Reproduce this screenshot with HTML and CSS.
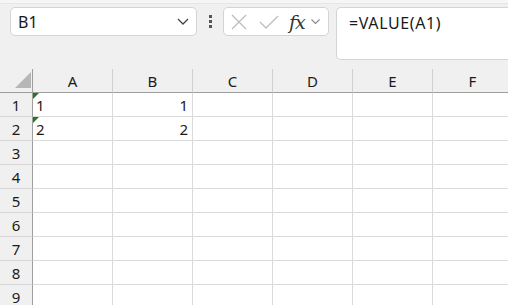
FILE: index.html
```html
<!DOCTYPE html>
<html lang="en">

<head>
    <meta charset="UTF-8">
    <title>Sheet</title>
    <link rel="stylesheet" href="styles.css">
</head>

<body>
    <div class="topbar"></div>

    <div class="toolbar">
        <div class="namebox">
            <span>B1</span>
            <svg class="chevron" width="12" height="7" viewBox="0 0 12 7">
                <path d="M1 1 L6 6 L11 1" fill="none" stroke="#444" stroke-width="1.3"/>
            </svg>
        </div>

        <div class="grip"><i></i><i></i><i></i></div>

        <div class="fxbox">
            <svg width="16" height="16" viewBox="0 0 16 16">
                <path d="M1 1 L15 15 M15 1 L1 15" stroke="#bdbdbd" stroke-width="1.3" fill="none"/>
            </svg>
            <svg class="check" width="20" height="14" viewBox="0 0 20 14">
                <path d="M1 7 L7 13 L19 1" stroke="#bdbdbd" stroke-width="1.3" fill="none"/>
            </svg>
            <span class="fx">fx</span>
            <svg class="small-chevron" width="9" height="5" viewBox="0 0 9 5">
                <path d="M0.5 0.5 L4.5 4.5 L8.5 0.5" fill="none" stroke="#888" stroke-width="1.1"/>
            </svg>
        </div>

        <div class="formula">=VALUE(A1)</div>
    </div>

    <div class="sheet">
        <div class="corner">
            <svg width="16" height="16" viewBox="0 0 16 16">
                <polygon points="16,0 16,16 0,16" fill="#b6b6b6"/>
            </svg>
        </div>
        <div class="colhead">A</div>
        <div class="colhead">B</div>
        <div class="colhead">C</div>
        <div class="colhead">D</div>
        <div class="colhead">E</div>
        <div class="colhead">F</div>

        <div class="rowhead">1</div>
        <div class="cell text-cell">1</div>
        <div class="cell num">1</div>
        <div class="cell"></div><div class="cell"></div><div class="cell"></div><div class="cell"></div>

        <div class="rowhead">2</div>
        <div class="cell text-cell">2</div>
        <div class="cell num">2</div>
        <div class="cell"></div><div class="cell"></div><div class="cell"></div><div class="cell"></div>

        <div class="rowhead">3</div>
        <div class="cell"></div><div class="cell"></div><div class="cell"></div><div class="cell"></div><div class="cell"></div><div class="cell"></div>
        <div class="rowhead">4</div>
        <div class="cell"></div><div class="cell"></div><div class="cell"></div><div class="cell"></div><div class="cell"></div><div class="cell"></div>
        <div class="rowhead">5</div>
        <div class="cell"></div><div class="cell"></div><div class="cell"></div><div class="cell"></div><div class="cell"></div><div class="cell"></div>
        <div class="rowhead">6</div>
        <div class="cell"></div><div class="cell"></div><div class="cell"></div><div class="cell"></div><div class="cell"></div><div class="cell"></div>
        <div class="rowhead">7</div>
        <div class="cell"></div><div class="cell"></div><div class="cell"></div><div class="cell"></div><div class="cell"></div><div class="cell"></div>
        <div class="rowhead">8</div>
        <div class="cell"></div><div class="cell"></div><div class="cell"></div><div class="cell"></div><div class="cell"></div><div class="cell"></div>
        <div class="rowhead">9</div>
        <div class="cell"></div><div class="cell"></div><div class="cell"></div><div class="cell"></div><div class="cell"></div><div class="cell"></div>
    </div>
</body>

</html>
```

FILE: styles.css
```css
body {
    margin: 0;
    background-color: #f0f0f0;
    font-family: "Noto Sans", "Open Sans", sans-serif;
    color: #1a1a1a;
    overflow: hidden;
    width: 508px;
    height: 305px;
}

.topbar {
    height: 3px;
    background-color: #f6f6f6;
    border-bottom: 1px solid #e6e6e6;
}

.toolbar {
    display: flex;
    align-items: flex-start;
    padding: 3px 0 0 10px;
    height: 53px;
}

.toolbar > * {
    flex: none;
}

.namebox {
    box-sizing: border-box;
    width: 187px;
    height: 29px;
    background-color: #fff;
    border: 1px solid #d4d4d4;
    border-radius: 5px;
    display: flex;
    align-items: center;
    justify-content: space-between;
    padding: 0 7px 0 7px;
    font-size: 16px;
}

.grip {
    width: 26px;
    height: 29px;
    display: flex;
    flex-direction: column;
    align-items: center;
    justify-content: center;
    gap: 2px;
}

.grip i {
    width: 3px;
    height: 3px;
    background-color: #555;
}

.fxbox {
    box-sizing: border-box;
    width: 106px;
    height: 29px;
    background-color: #fff;
    border: 1px solid #d4d4d4;
    border-radius: 5px;
    display: flex;
    align-items: center;
    padding-left: 7px;
}

.check {
    margin-left: 12px;
}

.fx {
    font-family: "DejaVu Serif", "Liberation Serif", serif;
    font-style: italic;
    font-size: 19px;
    color: #333;
    margin-left: 10px;
    letter-spacing: -1px;
}

.small-chevron {
    margin-left: 6px;
}

.toolbar > .formula {
    flex: 1 1 auto;
}

.formula {
    box-sizing: border-box;
    height: 53px;
    margin-left: 7px;
    background-color: #fff;
    border: 1px solid #d4d4d4;
    border-right: none;
    border-radius: 5px 0 0 5px;
    padding: 4px 0 0 12px;
    font-size: 16px;
    letter-spacing: 0.6px;
}

.sheet {
    margin-top: 9px;
    display: grid;
    grid-template-columns: 33px repeat(6, 80px);
    grid-template-rows: 24px repeat(9, 24px);
    font-size: 15px;
}

.corner {
    box-sizing: border-box;
    border-right: 1px solid #9e9e9e;
    border-bottom: 1px solid #9e9e9e;
    display: flex;
    align-items: flex-end;
    justify-content: flex-end;
    padding: 0 1px 4px 0;
}

.colhead {
    box-sizing: border-box;
    border-right: 1px solid #d0d0d0;
    border-bottom: 1px solid #9e9e9e;
    display: flex;
    align-items: center;
    justify-content: center;
    padding-top: 1px;
}

.rowhead {
    box-sizing: border-box;
    border-right: 1px solid #9e9e9e;
    border-bottom: 1px solid #d6d6d6;
    display: flex;
    align-items: center;
    justify-content: center;
}

.cell {
    box-sizing: border-box;
    background-color: #fff;
    border-right: 1px solid #dadada;
    border-bottom: 1px solid #dadada;
    display: flex;
    align-items: center;
    padding: 1px 4px 0 3px;
}

.num {
    justify-content: flex-end;
}

.text-cell {
    position: relative;
}

.text-cell::before {
    content: '';
    position: absolute;
    top: 0;
    left: 0;
    border-top: 6px solid #1e7b1e;
    border-right: 6px solid transparent;
}
```
